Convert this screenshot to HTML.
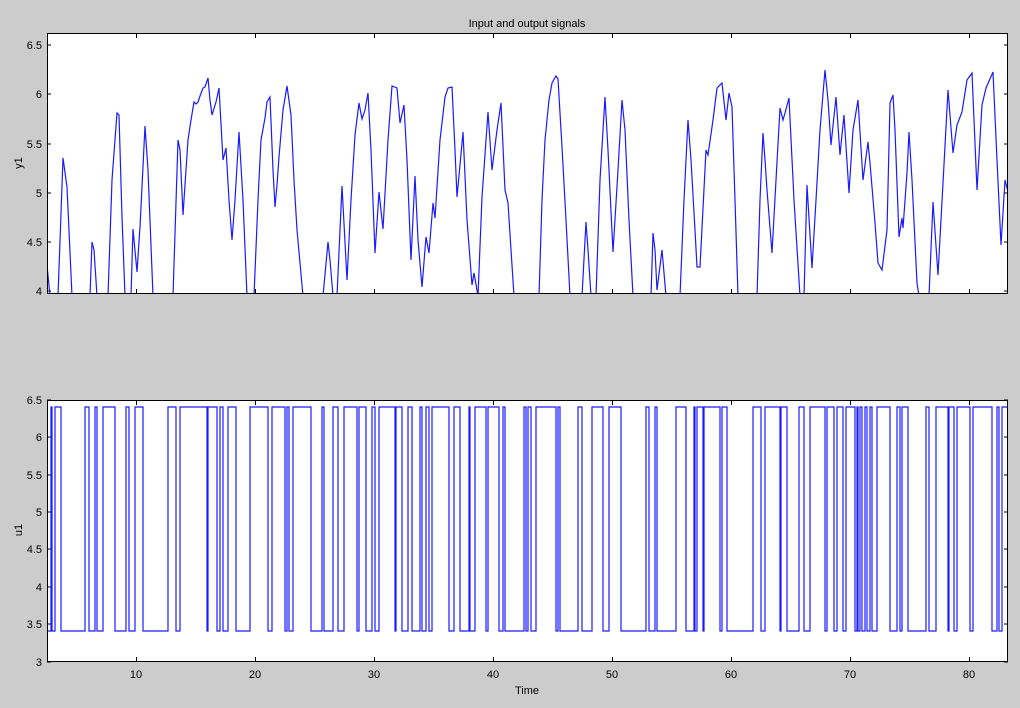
<!DOCTYPE html>
<html><head><meta charset="utf-8"><style>
html,body{margin:0;padding:0;background:#cccccc;}
svg{display:block;font-family:"Liberation Sans",Arial,sans-serif;}
</style></head><body>
<svg width="1020" height="708" viewBox="0 0 1020 708">
<rect width="1020" height="708" fill="#cccccc"/>
<rect x="47" y="33" width="961" height="261" fill="#fff"/>
<rect x="47" y="400" width="961" height="262" fill="#fff"/>
<text x="527" y="27" font-size="11" text-anchor="middle">Input and output signals</text>
<g font-size="11" text-anchor="end">
<text x="42" y="49">6.5</text><text x="42" y="98">6</text><text x="42" y="148">5.5</text><text x="42" y="197">5</text><text x="42" y="246">4.5</text><text x="42" y="295">4</text>
<text x="42" y="404">6.5</text><text x="42" y="441">6</text><text x="42" y="479">5.5</text><text x="42" y="516">5</text><text x="42" y="553">4.5</text><text x="42" y="591">4</text><text x="42" y="628">3.5</text><text x="42" y="666">3</text>
</g>
<g font-size="11" text-anchor="middle">
<text x="136" y="678">10</text><text x="255" y="678">20</text><text x="374" y="678">30</text><text x="493" y="678">40</text><text x="612" y="678">50</text><text x="731" y="678">60</text><text x="850" y="678">70</text><text x="969" y="678">80</text>
<text x="527" y="694">Time</text>
</g>
<text font-size="11" text-anchor="middle" transform="translate(22,163) rotate(-90)">y1</text>
<text font-size="11" text-anchor="middle" transform="translate(22,530) rotate(-90)">u1</text>
<g stroke="#000" stroke-width="1" fill="none">
<path d="M47,45h4M47,94h4M47,144h4M47,193h4M47,242h4M47,291h4M1008,45h-4M1008,94h-4M1008,144h-4M1008,193h-4M1008,242h-4M1008,291h-4"/>
<path d="M47,400h4M47,437h4M47,475h4M47,512h4M47,549h4M47,587h4M47,624h4M47,662h4M1008,400h-4M1008,437h-4M1008,475h-4M1008,512h-4M1008,549h-4M1008,587h-4M1008,624h-4M1008,662h-4"/>
<path d="M136.5,33v5M255.5,33v5M374.5,33v5M493.5,33v5M612.5,33v5M731.5,33v5M850.5,33v5M969.5,33v5M136.5,294v-5M255.5,294v-5M374.5,294v-5M493.5,294v-5M612.5,294v-5M731.5,294v-5M850.5,294v-5M969.5,294v-5"/>
<path d="M136.5,400v5M255.5,400v5M374.5,400v5M493.5,400v5M612.5,400v5M731.5,400v5M850.5,400v5M969.5,400v5M136.5,662v-5M255.5,662v-5M374.5,662v-5M493.5,662v-5M612.5,662v-5M731.5,662v-5M850.5,662v-5M969.5,662v-5"/>
</g>
<svg x="47" y="33" width="961" height="261" viewBox="47 33 961 261" overflow="hidden">
<polyline fill="none" stroke="#1a1aff" stroke-width="1.2" points="47,265 50,296 58,296 63,158 67,187 72,296 90,296 92,242 94,250 97,296 108,296 112,180 117,113 119,115 122,217 125,296 131,296 133,229 137,272 140,227 145,126 148,170 153,296 173,296 178,140 180,150 183,215 188,140 191,120 194,102 196,104 198,102 200,96 203,88 205,87 208,78 210,100 212,115 216,102 219,88 223,160 226,148 229,200 232,240 235,200 239,132 243,200 247,296 254,296 258,200 261,140 265,118 267,102 270,97 273,170 275,207 277,185 279,157 283,110 287,86 291,115 294,180 297,230 303,296 323,296 328,242 330,260 333,296 337,296 342,186 347,280 351,200 355,135 359,103 362,119 365,110 368,93 371,150 375,253 379,192 383,229 388,140 392,86 397,88 400,123 404,105 407,160 411,260 415,176 418,240 422,287 426,237 429,253 433,203 435,218 440,140 445,97 448,88 452,87 455,150 457,197 460,165 463,132 467,220 472,285 474,273 478,296 482,197 488,112 492,170 497,130 501,103 505,190 508,203 511,250 514,296 539,296 542,200 545,140 549,100 552,83 556,76 558,79 562,147 566,220 570,296 582,296 586,222 588,250 591,296 596,296 600,180 605,97 608,150 613,252 618,170 622,100 625,130 629,220 633,296 651,296 653,233 655,250 657,290 662,250 666,296 680,296 684,200 688,120 691,160 695,230 697,267 700,267 706,150 708,155 713,120 717,88 722,83 726,120 729,93 732,107 735,200 738,296 757,296 760,200 763,133 765,160 767,190 772,253 776,180 780,108 783,120 785,113 789,98 794,200 800,296 804,296 807,185 812,268 816,200 820,130 825,70 828,100 831,145 836,97 840,155 844,115 849,193 853,130 858,100 863,180 868,142 870,163 875,223 878,263 882,270 887,230 890,103 893,95 895,130 899,237 902,218 903,228 907,173 909,132 912,180 917,283 919,296 929,296 933,202 938,275 943,183 948,90 953,153 957,125 962,112 967,80 972,73 977,190 982,105 986,88 993,72 997,160 1001,245 1005,180 1008,192"/>
</svg>
<path fill="none" stroke="#1a1aff" stroke-width="1.2" d="M47,631 H51V407H52V631 H55V407H61V631 H85V407H89V631 H95V407H97V631 H103V407H115V631 H126V407H129V631 H135V407H143V631 H168V407H176V631 H180V407H207V631 H208V407H217V631 H220V407H223V631 H228V407H236V631 H250V407H268V631 H272V407H285V631 H287V407H289V631 H293V407H311V631 H322V407H324V631 H333V407H338V631 H344V407H357V631 H359V407H366V631 H372V407H375V631 H379V407H395V631 H396V407H402V631 H408V407H412V631 H420V407H422V631 H426V407H429V631 H432V407H449V631 H454V407H460V631 H469V407H470V631 H475V407H486V631 H488V407H499V631 H503V407H505V631 H524V407H526V631 H528V407H531V631 H536V407H556V631 H558V407H560V631 H578V407H582V631 H592V407H603V631 H609V407H621V631 H646V407H649V631 H655V407H657V631 H676V407H686V631 H694V407H695V631 H697V407H703V631 H704V407H720V631 H722V407H727V631 H753V407H761V631 H765V407H780V631 H781V407H787V631 H799V407H804V631 H810V407H825V631 H827V407H834V631 H837V407H843V631 H846V407H855V631 H857V407H858V631 H860V407H862V631 H865V407H867V631 H870V407H872V631 H877V407H890V631 H897V407H900V631 H902V407H908V631 H926V407H929V631 H936V407H948V631 H949V407H954V631 H957V407H970V631 H973V407H992V631 H997V407H999V631 H1002V407H1007"/>
<rect x="47.5" y="33.5" width="960" height="260" fill="none" stroke="#000"/>
<rect x="47.5" y="400.5" width="960" height="261" fill="none" stroke="#000"/>
</svg>
</body></html>
